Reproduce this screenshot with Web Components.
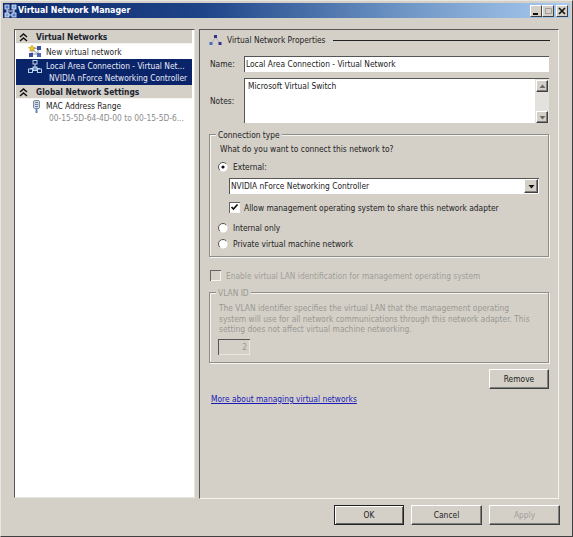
<!DOCTYPE html>
<html><head><meta charset="utf-8"><title>Virtual Network Manager</title>
<style>
html,body{margin:0;padding:0;background:#d4d0c8;overflow:hidden}
body{font:8.35px/12px "DejaVu Sans","Liberation Sans",sans-serif;font-stretch:condensed;color:#222}
</style></head><body>
<vn-window>
  <vn-titlebar slot="title">Virtual Network Manager</vn-titlebar>
  <vn-nav slot="nav">
    <vn-nav-head>Virtual Networks</vn-nav-head>
    <vn-nav-item icon="new" h="15">New virtual network</vn-nav-item>
    <vn-nav-item icon="net" h="26" selected sub="NVIDIA nForce Networking Controller">Local Area Connection - Virtual Net...</vn-nav-item>
    <vn-nav-head>Global Network Settings</vn-nav-head>
    <vn-nav-item icon="mac" h="26" sub="00-15-5D-64-4D-00 to 00-15-5D-6..." subgray>MAC Address Range</vn-nav-item>
  </vn-nav>
  <vn-props slot="main"></vn-props>
  <vn-button slot="foot" default w="70">OK</vn-button>
  <vn-button slot="foot" w="71">Cancel</vn-button>
  <vn-button slot="foot" w="71" disabled>Apply</vn-button>
</vn-window>
<script>
const bevelOut='border:1px solid;border-color:#fff #404040 #404040 #fff;box-shadow:inset -1px -1px 0 #808080;';
const sunken='box-shadow:inset 1px 1px 0 #555,inset -1px -1px 0 #e8e6e0;';
function def(name,render){
  customElements.define(name,class extends HTMLElement{
    connectedCallback(){ if(this.shadowRoot) return; const r=this.attachShadow({mode:'open'}); r.innerHTML=render(this); }
  });
}
const arrow=(d,c='#222')=>`<svg width="7" height="5" viewBox="0 0 7 5"><path d="${d=='up'?'M3.5 0.5L0.5 4h6z':'M0.5 1h6L3.5 4.5z'}" fill="${c}"/></svg>`;

def('vn-window',()=>`<style>
:host{display:flex;flex-direction:column;box-sizing:border-box;width:573px;height:537px;background:#d4d0c8;
 border:1px solid;border-color:#e8e6e0 #404040 #404040 #e8e6e0;padding:2px 2px 2px}
.body{flex:1;display:flex;gap:4px;padding:11px 11px 0 11px;min-height:0}
.foot{display:flex;justify-content:flex-end;gap:7px;padding:7px 10px 9px 0}
</style><slot name="title"></slot>
<div class="body"><slot name="nav"></slot><slot name="main"></slot></div>
<div class="foot"><slot name="foot"></slot></div>`);

def('vn-titlebar',()=>`<style>
:host{display:flex;align-items:center;height:15px;flex:none;padding:0 1px 0 1px;
 background:linear-gradient(90deg,#0f2a6e 0%,#1f4488 35%,#6d94c4 70%,#a9cbef 100%);color:#fff;font-weight:700}
.t{flex:1;font-size:8.8px;white-space:nowrap;line-height:15px}
.b{box-sizing:border-box;width:12px;height:12px;background:#d4d0c8;border:1px solid;border-color:#fff #404040 #404040 #fff;display:flex;align-items:center;justify-content:center}
.g{display:flex;margin-right:1px}
.ic{margin-right:1px;flex:none}
</style>
<svg class="ic" width="13" height="14" viewBox="0 0 13 14"><path d="M3 3v8h7V3M3 7h7" stroke="#dfe8f5" fill="none"/><rect x="1" y="1" width="4" height="4" fill="#4d79c8" stroke="#e8eef8" stroke-width=".8"/><rect x="8" y="1" width="4" height="4" fill="#7ba2dc" stroke="#e8eef8" stroke-width=".8"/><rect x="1" y="9" width="4" height="4" fill="#7ba2dc" stroke="#e8eef8" stroke-width=".8"/><rect x="8" y="9" width="4" height="4" fill="#4d79c8" stroke="#e8eef8" stroke-width=".8"/></svg>
<span class="t"><slot></slot></span>
<span class="g">
<span class="b"><svg width="8" height="8" viewBox="0 0 8 8"><rect x="1" y="6" width="5" height="2" fill="#111"/></svg></span>
<span class="b"><svg width="9" height="8" viewBox="0 0 9 8"><path d="M1.500 1.500h6v5h-6z" fill="none" stroke="#a09e98"/></svg></span>
<span class="b" style="margin-left:2px"><svg width="8" height="8" viewBox="0 0 8 8"><path d="M1 1l6 6M7 1l-6 6" stroke="#111" stroke-width="1.600"/></svg></span>
</span>`);

def('vn-nav',()=>`<style>
:host{display:block;box-sizing:border-box;width:181px;height:469px;flex:none;background:#fff;padding:0 2px 0 1px;border-right:1px solid #e8e6e0;border-bottom:1px solid #e8e6e0;border-left:1px solid #555;border-top:1px solid #555}
</style><slot></slot>`);

def('vn-nav-head',()=>`<style>
:host{display:flex;align-items:center;box-sizing:border-box;height:14px;background:#d4d0c8;font-weight:700;padding:1px 0 0 3px;border-bottom:1px solid #f4f4f0;color:#1c2430;white-space:nowrap}
svg{margin-right:8px;flex:none}
</style><svg width="9" height="9" viewBox="0 0 9 9"><path d="M1 4l3.500-3L8 4M1 8l3.500-3L8 8" fill="none" stroke="#111" stroke-width="1.500"/></svg><slot></slot>`);

const icons={
 new:`<svg width="14" height="12" viewBox="0 0 14 12"><path d="M4 4l6-1M4 4l0 5M4 4l6 5M10 3v6M4 9h6" stroke="#8a94bd"/><rect x="9" y="1" width="4" height="4" fill="#3d4f9c"/><rect x="1" y="8" width="4" height="4" fill="#3d4f9c"/><rect x="9" y="8" width="4" height="4" fill="#5264ad"/><path d="M4 0l1 2.200 2.400.2-1.800 1.600.6 2.400L4 5.200 1.800 6.400l.6-2.400L.6 2.400 3 2.200z" fill="#f2c81e" stroke="#a98a10" stroke-width=".5"/></svg>`,
 net:`<svg width="14" height="13" viewBox="0 0 14 13"><path d="M7 4v4M2.500 8.500h9M2.500 8.500v1M11.500 8.500v1" stroke="#cfe0f5" fill="none"/><rect x="5" y="0.500" width="4" height="3.500" fill="#0a246a" stroke="#cfe0f5" stroke-width=".9"/><rect x="0.500" y="9" width="4" height="3.500" fill="#0a246a" stroke="#cfe0f5" stroke-width=".9"/><rect x="5" y="7" width="4" height="3.500" fill="#5f8fd0" stroke="#cfe0f5" stroke-width=".9"/><rect x="9.500" y="9" width="4" height="3.500" fill="#0a246a" stroke="#cfe0f5" stroke-width=".9"/></svg>`,
 mac:`<svg width="7" height="13" viewBox="0 0 7 13"><rect x="0.500" y="0.500" width="6" height="8" rx="1.200" fill="#cdd6e2" stroke="#7d8a9c"/><path d="M2 2.500h3M2 4.500h3M2 6.500h3" stroke="#6f86a8"/><path d="M3.500 9v4" stroke="#5d89b8" stroke-width="2"/></svg>`
};
def('vn-nav-item',(e)=>{
 const sel=e.hasAttribute('selected');
 const sub=e.getAttribute('sub');
 const ic=e.getAttribute('icon');
 const mac=ic=='mac';
 return `<style>
:host{display:flex;box-sizing:border-box;height:${e.getAttribute('h')}px;white-space:nowrap;background:${sel?'#0a246a':'#fff'};color:${sel?'#e8ecf6':'#222'}}
.i{flex:none;display:flex;align-items:flex-start;padding:1px 0 0 ${mac?'17':'12'}px;box-sizing:border-box;width:30px}
.i svg{display:block}
.l{line-height:12px;padding-top:${mac?1:sel?1:2}px}
.s{margin-left:3px;color:${sel?'#e8ecf6':'#8c8c8c'}}
</style><div class="i">${icons[ic]}</div><div class="l"><div><slot></slot></div>${sub?`<div class="s">${sub}</div>`:''}</div>`;
});

def('vn-props',()=>`<style>
:host{display:block;box-sizing:border-box;width:360px;height:470px;flex:none;border:1px solid;border-color:#555 #f4f4f0 #f4f4f0 #555;padding:3px 9px 0 9px}
.h{display:flex;align-items:center;height:14px;gap:5px}
.h i{flex:1;height:1px;background:#222;margin-right:-1px;margin-left:2px}
.h span{white-space:nowrap}
.row{display:flex;margin-left:1px}
.lbl{width:34px;flex:none}
.name{margin-top:9px;height:16px;align-items:center}
.notes{margin-top:6px;height:45px;align-items:center}
.after{margin-top:11px}
.en{display:flex;align-items:center;gap:5px;margin:12px 0 0 1px;height:13px;color:#a09e98;white-space:nowrap}
.vlan{margin-top:10px}
.p{color:#9a9892;margin:3px 0 0 1px;line-height:10.500px;height:33px;width:313px}
.spin{box-sizing:border-box;width:32px;height:16px;margin-top:3px;text-align:right;padding:2px 3px;color:#9a9892;${sunken}}
.rm{display:flex;justify-content:flex-end;margin-top:6px}
.lnk{margin:4px 0 0 2px}
a{color:#1a1ab8;text-decoration:underline}
.q{margin:1px 0 0 2px;height:13px}
.rr{margin-top:4px}
.sel{margin:5px 0 0 11px;width:310px}
.chk{display:flex;align-items:center;gap:4px;margin:7px 0 0 11px;height:13px}
.rr2{margin-top:7px}
.rr3{margin-top:3px}
</style>
<div class="h"><svg width="13" height="12" viewBox="0 0 13 12"><rect x="5" y="1" width="3" height="3" fill="#33308e"/><rect x="0.500" y="8" width="3" height="3" fill="#4b6cc0"/><rect x="9.500" y="8" width="3" height="3" fill="#33308e"/><path d="M6 4L3 8M7 4l3 4" stroke="#b0b0c0"/></svg><span>Virtual Network Properties</span><i></i></div>
<div class="row name"><span class="lbl">Name:</span><vn-input style="flex:1">Local Area Connection - Virtual Network</vn-input></div>
<div class="row notes"><span class="lbl">Notes:</span><vn-notes style="flex:1">Microsoft Virtual Switch</vn-notes></div>
<vn-group class="after" label="Connection type" h="123">
 <div class="q">What do you want to connect this network to?</div>
 <vn-radio class="rr" checked>External:</vn-radio>
 <vn-select class="sel">NVIDIA nForce Networking Controller</vn-select>
 <div class="chk"><vn-check checked></vn-check><span>Allow management operating system to share this network adapter</span></div>
 <vn-radio class="rr2">Internal only</vn-radio>
 <vn-radio class="rr3">Private virtual machine network</vn-radio>
</vn-group>
<div class="en"><vn-check disabled></vn-check><span>Enable virtual LAN identification for management operating system</span></div>
<vn-group class="vlan" label="VLAN ID" h="71" disabled>
 <div class="p">The VLAN identifier specifies the virtual LAN that the management operating system will use for all network communications through this network adapter. This setting does not affect virtual machine networking.</div>
 <div class="spin">2</div>
</vn-group>
<div class="rm"><vn-button w="60" tall>Remove</vn-button></div>
<div class="lnk"><a href="#">More about managing virtual networks</a></div>`);

def('vn-input',()=>`<style>
:host{display:block;box-sizing:border-box;height:16px;background:#fff;padding:2px 2px;white-space:nowrap;box-shadow:inset 1px 1px 0 #555}
</style><slot></slot>`);

def('vn-notes',()=>`<style>
:host{display:flex;box-sizing:border-box;height:45px;background:#fff;box-shadow:inset 1px 1px 0 #555}
.t{flex:1;padding:2px 4px}
.sb{width:14px;background:#e4e2dc;display:flex;flex-direction:column;justify-content:space-between;padding:1px 1px 0 1px;box-sizing:border-box;border-top:1px solid #555}
.a{box-sizing:border-box;height:12px;background:#d4d0c8;${bevelOut}display:flex;align-items:center;justify-content:center}
</style><div class="t"><slot></slot></div><div class="sb"><div class="a">${arrow('up','#666')}</div><div class="a">${arrow('dn','#666')}</div></div>`);

def('vn-group',(e)=>{
 const dis=e.hasAttribute('disabled');
 return `<style>
:host{display:block;position:relative;box-sizing:border-box;height:${e.getAttribute('h')}px;border:1px solid #8f8d88;box-shadow:inset 1px 1px 0 #f4f4f0,1px 1px 0 #f4f4f0;padding:7px 8px 0 8px}
.lg{position:absolute;left:6px;top:-6px;background:#d4d0c8;padding:0 2px;color:${dis?'#9a9892':'inherit'};white-space:nowrap}
</style><div class="lg">${e.getAttribute('label')}</div><slot></slot>`});

def('vn-radio',(e)=>`<style>
:host{display:flex;align-items:center;gap:5px;height:13px;white-space:nowrap}
svg{flex:none}
</style><svg width="10" height="10" viewBox="0 0 10 10"><circle cx="5" cy="5" r="4.500" fill="#fff"/><path d="M8.200 1.800A4.500 4.500 0 0 0 1.800 8.200" fill="none" stroke="#555"/>${e.hasAttribute('checked')?'<circle cx="5" cy="5" r="1.600" fill="#111"/>':''}</svg><slot></slot>`);

def('vn-check',(e)=>`<style>
:host{display:block;flex:none;box-sizing:border-box;width:11px;height:11px;background:${e.hasAttribute('disabled')?'#d4d0c8':'#fff'};box-shadow:inset 1px 1px 0 #666,inset -1px -1px 0 #f4f4f0}
svg{display:block}
</style>${e.hasAttribute('checked')?'<svg width="11" height="11" viewBox="0 0 11 11"><path d="M2.500 5l2 2 4-4.500" fill="none" stroke="#111" stroke-width="1.700"/></svg>':''}`);

def('vn-select',()=>`<style>
:host{display:flex;box-sizing:border-box;height:16px;background:#fff;box-shadow:inset 1px 1px 0 #555;padding:1px 1px 1px 2px;align-items:stretch}
.t{flex:1;white-space:nowrap;line-height:14px}
.a{box-sizing:border-box;width:14px;background:#d4d0c8;${bevelOut}display:flex;align-items:center;justify-content:center}
</style><div class="t"><slot></slot></div><div class="a">${arrow('dn','#111')}</div>`);

def('vn-button',(e)=>{
 const dis=e.hasAttribute('disabled'), d=e.hasAttribute('default');
 return `<style>
:host{display:flex;align-items:center;justify-content:center;box-sizing:border-box;width:${e.getAttribute('w')}px;height:20px;background:#d4d0c8;
 color:${dis?'#a09e98':'#222'};border:1px solid;${d?'border-color:#222;box-shadow:inset 1px 1px 0 #fff,inset -1px -1px 0 #666;':'border-color:#fff #404040 #404040 #fff;box-shadow:inset -1px -1px 0 #808080;'}}
</style><slot></slot>`});
</script>
</body></html>
